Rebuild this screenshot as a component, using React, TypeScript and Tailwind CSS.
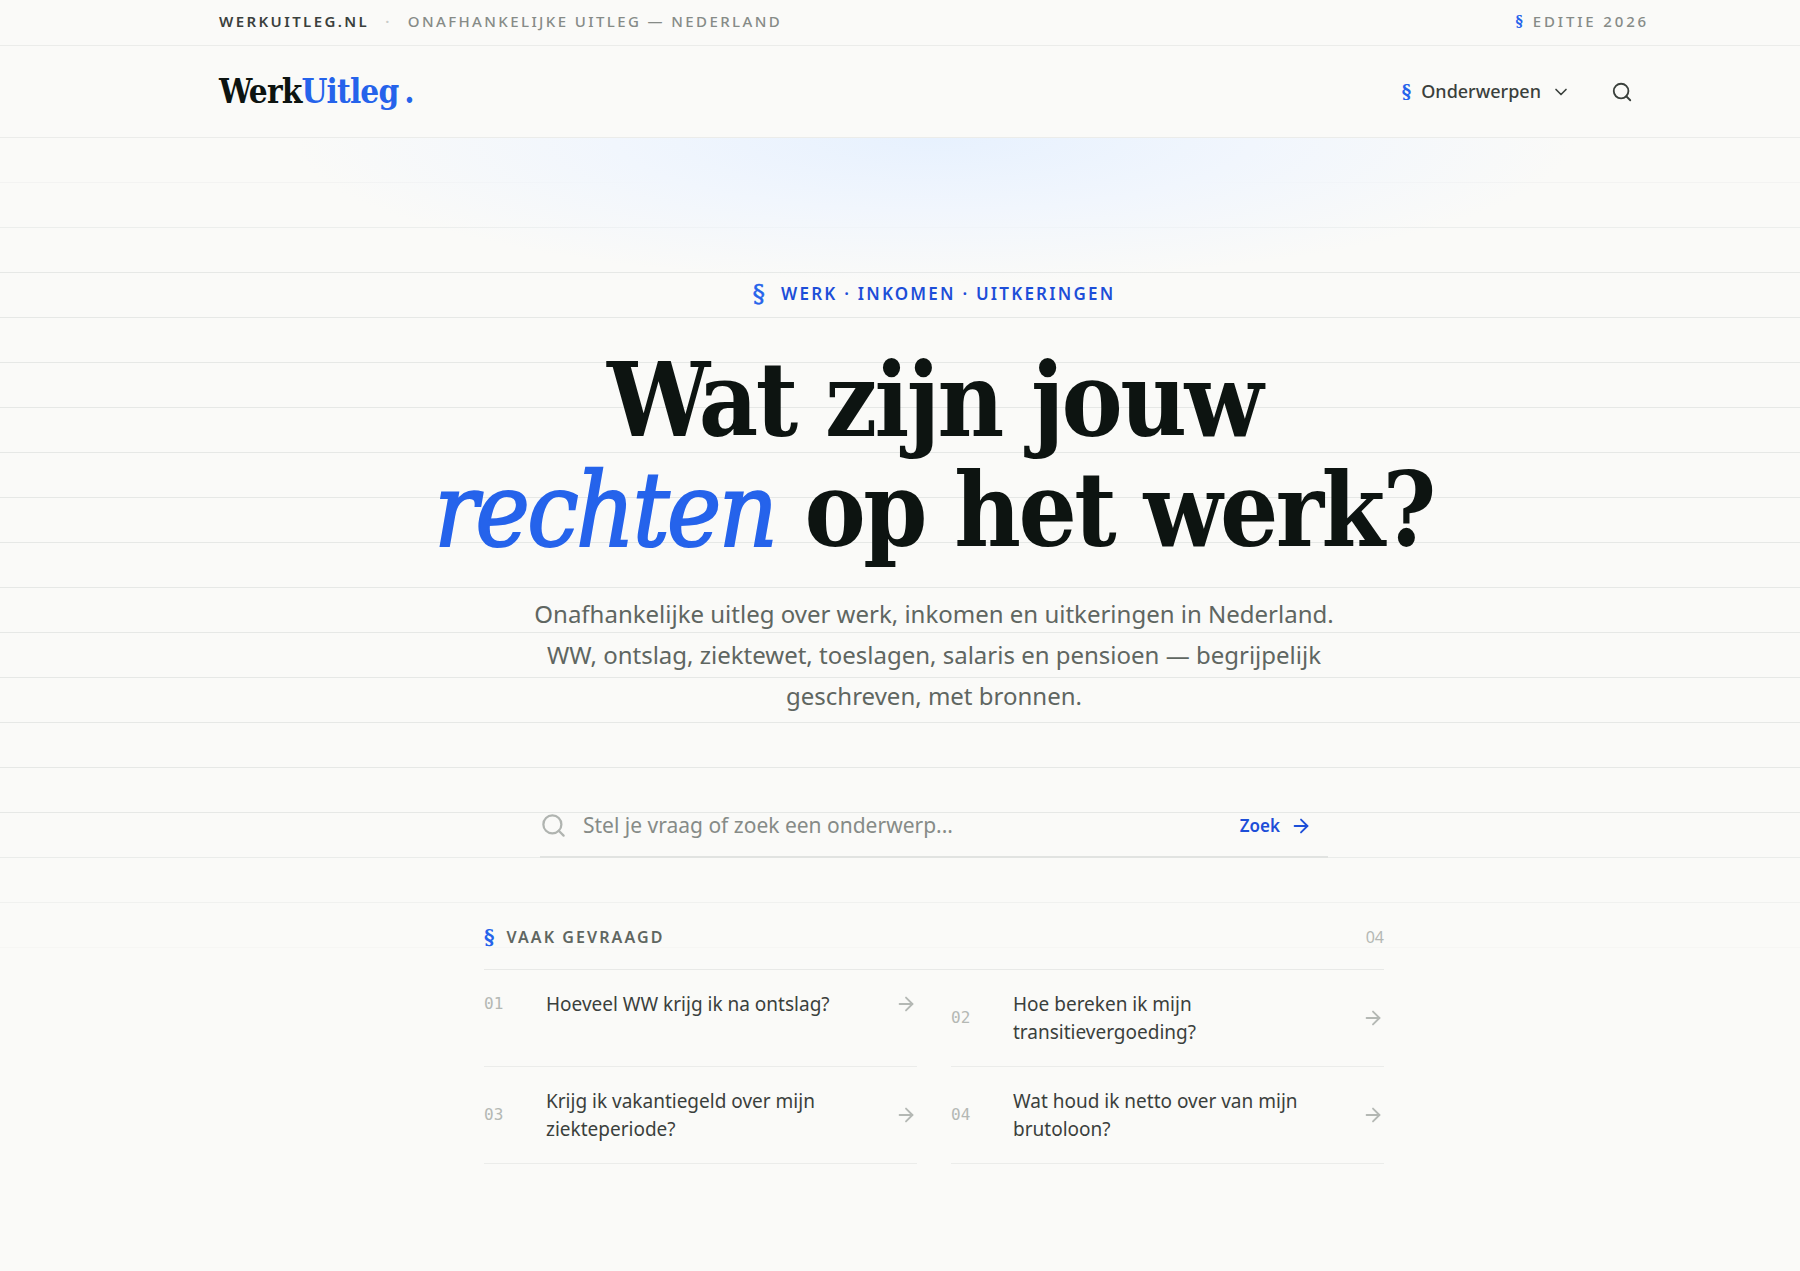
import { useState } from 'react';
import { ArrowRight, ChevronDown, Search } from 'lucide-react';

const SERIF = "font-['DejaVu_Serif_Condensed','DejaVu_Serif',serif]";
const SIGN = "font-['DejaVu_Serif',serif] tracking-normal text-[#2563eb]";

const QUESTIONS = [
  { id: '01', text: 'Hoeveel WW krijg ik na ontslag?' },
  { id: '02', text: 'Hoe bereken ik mijn transitievergoeding?' },
  { id: '03', text: 'Krijg ik vakantiegeld over mijn ziekteperiode?' },
  { id: '04', text: 'Wat houd ik netto over van mijn brutoloon?' },
];

function TopBar() {
  return (
    <div className="border-b border-[#ebecea]">
      <div className="mx-auto flex h-[45px] max-w-[1430px] items-center justify-between pb-0.5 text-[15px] font-semibold uppercase tracking-[0.16em] text-[#868b87]">
        <div className="flex items-center gap-4">
          <span className="text-[#3a403c]">WerkUitleg.nl</span>
          <span className="text-[#c9ccc9]">·</span>
          <span className="font-medium">Onafhankelijke uitleg — Nederland</span>
        </div>
        <div className="flex items-center gap-2.5">
          <span className={`${SIGN} text-[14px]`}>§</span>
          <span className="font-medium tracking-[0.19em]">Editie 2026</span>
        </div>
      </div>
    </div>
  );
}

function Header() {
  return (
    <header className="border-b border-[#ebecea]">
      <div className="mx-auto flex h-[91px] max-w-[1430px] items-center justify-between">
        <a href="#" className={`${SERIF} text-[33px] font-semibold tracking-tight text-[#0d1411]`}>
          Werk<span className="text-[#2563eb]">Uitleg</span>
          <span className="ml-1.5 text-[#2563eb]">.</span>
        </a>
        <nav className="flex items-center gap-6 text-[#3a403c]">
          <button type="button" className="flex items-center gap-2.5 text-[18px] font-medium">
            <span className={`${SIGN} font-semibold`}>§</span>
            Onderwerpen
            <ChevronDown size={20} strokeWidth={2} />
          </button>
          <button type="button" aria-label="Zoeken" className="p-4">
            <Search size={22} strokeWidth={2} />
          </button>
        </nav>
      </div>
    </header>
  );
}

function SearchForm() {
  const [query, setQuery] = useState('');

  return (
    <form
      className="mx-auto mt-[79px] flex h-[63px] max-w-[788px] items-center gap-4 border-b-2 border-[#e1e3e1]"
      onSubmit={(e) => e.preventDefault()}
    >
      <Search size={27} strokeWidth={2} className="shrink-0 text-[#b0b4b0]" />
      <input
        type="search"
        aria-label="Zoek een onderwerp"
        value={query}
        onChange={(e) => setQuery(e.target.value)}
        placeholder="Stel je vraag of zoek een onderwerp..."
        className="min-w-0 flex-1 bg-transparent text-[21px] text-[#0d1411] outline-none placeholder:text-[#868b87]"
      />
      <button type="submit" className="flex items-center gap-2.5 px-4 text-[17px] font-semibold text-[#1d4ed8]">
        Zoek
        <ArrowRight size={22} strokeWidth={2} />
      </button>
    </form>
  );
}

function FrequentQuestions() {
  return (
    <section className="mx-auto mt-[47px] max-w-[900px]">
      <div className="flex h-[65px] items-center justify-between border-b border-[#e8e9e7]">
        <h2 className="flex items-center gap-3 text-[16px] font-semibold uppercase tracking-[0.13em] text-[#5f6661]">
          <span className={`${SIGN} text-[20px]`}>§</span>
          Vaak gevraagd
        </h2>
        <span className="text-[16px] text-[#b4b8b4]">04</span>
      </div>
      <ul className="grid grid-cols-2 gap-x-[34px]">
        {QUESTIONS.map((q) => (
          <li key={q.id} className="border-b border-[#ebecea]">
            <a href="#" className="flex items-center py-5 text-[19px] leading-7 text-[#3a403c]">
              <span className="w-[62px] shrink-0 font-['DejaVu_Sans_Mono',monospace] text-[16px] text-[#b4b8b4]">{q.id}</span>
              <span className="max-w-[300px] flex-1">{q.text}</span>
              <ArrowRight size={22} strokeWidth={2} className="ml-auto shrink-0 text-[#b4b8b4]" />
            </a>
          </li>
        ))}
      </ul>
    </section>
  );
}

function Hero() {
  return (
    <main className="relative pt-[135px] pb-[105px]">
      {/* Ruled paper */}
      <div className="absolute inset-x-0 top-0 h-[840px] bg-[repeating-linear-gradient(to_bottom,transparent_0,transparent_44px,#e6e8e6_44px,#e6e8e6_45px)] [mask-image:linear-gradient(to_bottom,transparent,black_16%,black_82%,transparent)]" />
      {/* Glow below the header */}
      <div className="absolute inset-x-0 top-0 ml-[68px] h-[200px] bg-[radial-gradient(ellipse_640px_145px_at_50%_0,#e7f1fe,#f1f6fd_50%,transparent)]" />

      <div className="relative pl-[68px] text-center">
        <p className="flex h-[42px] items-center justify-center gap-4 text-[17px] font-semibold uppercase tracking-[0.13em] text-[#1d4ed8]">
          <span className={`${SIGN} text-[25px] font-medium [-webkit-text-stroke:0.5px]`}>§</span>
          Werk · Inkomen · Uitkeringen
        </p>
        <h1 className={`${SERIF} mt-[30px] text-[102px] font-semibold leading-[110px] tracking-tight text-[#0d1411]`}>
          Wat zijn jouw
          <br />
          <em className="font-medium text-[#2563eb] [-webkit-text-stroke:2px]">rechten</em> op het werk?
        </h1>
        <p className="mx-auto mt-[27px] max-w-[820px] text-[24px] leading-[41px] text-[#5f6661]">
          Onafhankelijke uitleg over werk, inkomen en uitkeringen in Nederland. WW, ontslag, ziektewet, toeslagen,
          salaris en pensioen — begrijpelijk geschreven, met bronnen.
        </p>
        <div className="text-left">
          <SearchForm />
          <FrequentQuestions />
        </div>
      </div>
    </main>
  );
}

export default function App() {
  return (
    <div className="min-h-screen bg-[#fafaf8] font-['Noto_Sans',sans-serif]">
      <div className="[&>*]:pl-[68px]">
        <TopBar />
        <Header />
      </div>
      <Hero />
    </div>
  );
}
